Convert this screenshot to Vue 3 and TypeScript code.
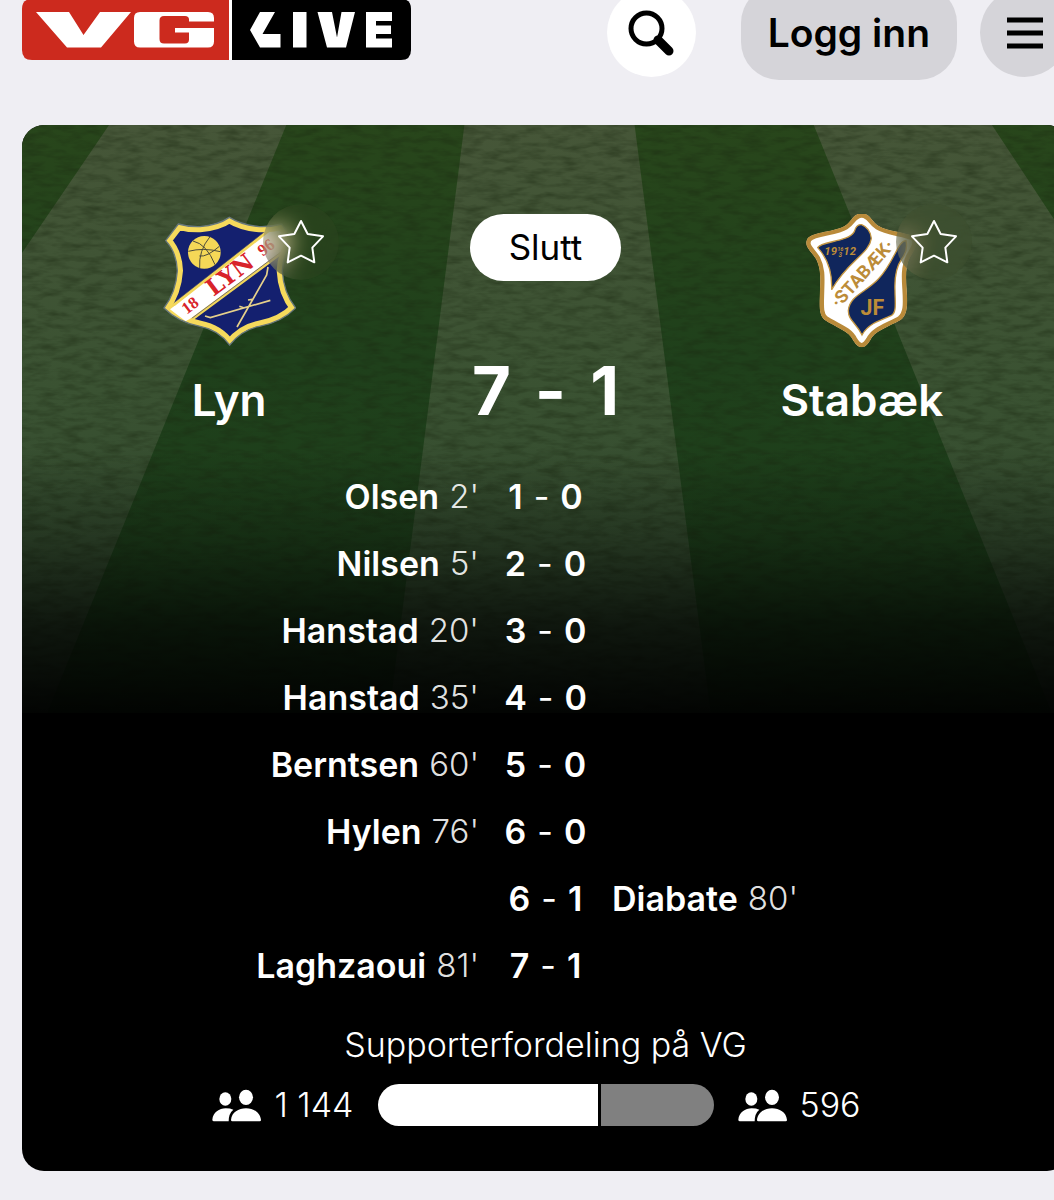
<script setup lang="ts">
interface Goal {
  side: 'home' | 'away'
  player: string
  minute: number
  home: number
  away: number
}

const goals: Goal[] = [
  { side: 'home', player: 'Olsen', minute: 2, home: 1, away: 0 },
  { side: 'home', player: 'Nilsen', minute: 5, home: 2, away: 0 },
  { side: 'home', player: 'Hanstad', minute: 20, home: 3, away: 0 },
  { side: 'home', player: 'Hanstad', minute: 35, home: 4, away: 0 },
  { side: 'home', player: 'Berntsen', minute: 60, home: 5, away: 0 },
  { side: 'home', player: 'Hylen', minute: 76, home: 6, away: 0 },
  { side: 'away', player: 'Diabate', minute: 80, home: 6, away: 1 },
  { side: 'home', player: 'Laghzaoui', minute: 81, home: 7, away: 1 },
]

const supporters = { home: 1144, away: 596 }
const homeShare = (100 * supporters.home) / (supporters.home + supporters.away)
const format = (n: number): string => String(n).replace(/\B(?=(\d{3})+$)/g, ' ')

const lynShield =
  'M238 55Q205 78 150 83Q115 84 85 75L47 125Q80 160 82 215Q78 280 42 327Q85 370 150 382Q205 392 239 438Q275 392 328 382Q395 370 437 327Q400 280 397 215Q400 160 432 125L395 75Q365 84 328 83Q275 78 238 55Z'
const stabaekShield =
  'M212 43C238 43 240 66 262 80C290 98 340 98 368 112C388 125 372 150 357 175C342 205 345 240 347 270C350 320 350 345 330 362C290 385 250 395 237 425Q212 465 187 425C174 395 134 385 100 362C82 345 86 320 87 270C88 235 90 210 75 180C60 155 36 142 50 118C65 98 134 98 162 80C184 66 186 43 212 43Z'
</script>

<template>
  <div class="page">
    <header class="topbar">
      <a class="logo" href="#" aria-label="VG Live">
        <svg viewBox="0 0 389 64" width="389" height="64" aria-hidden="true">
          <path d="M10 0H207V61H10Q0 61 0 51V10Q0 0 10 0Z" fill="#cc2a1e" />
          <path d="M207 0H210V61H207Z" fill="#fff" />
          <path d="M210 0H379Q389 0 389 10V51Q389 61 379 61H210Z" fill="#000" />
          <path
            d="M14 13H47L61.500 36L78 13H109L79 48.500H45ZM118 13H186Q192 13 192 19V22.500H167V20.500Q167 17 163 17H142Q137.500 17 137.500 21.500V40Q137.500 44.500 142 44.500H163Q167 44.500 167 40.500V33.500H153V29H192V42.500Q192 48.500 186 48.500H118Q112 48.500 112 42.500V19Q112 13 118 13Z"
            fill="#fff"
          />
          <path
            d="M238 13H253L240.500 35H258.500V48.500H238L228 31ZM271 13H284.500V48.500H271ZM295.500 13H310L315 38.500L319.500 13H333L324 48.500H305ZM344 13H370V22H354V26.500H369V35H354V39.500H370V48.500H344Z"
            fill="#fff"
          />
        </svg>
      </a>
      <nav class="actions" aria-label="Hovedmeny">
        <button class="round search" type="button" aria-label="Søk">
          <svg viewBox="0 0 46 46" width="46" height="46" aria-hidden="true">
            <circle cx="18.500" cy="18.500" r="15.500" fill="none" stroke="#000" stroke-width="5" />
            <path d="M30 30L41 41" stroke="#000" stroke-width="9" stroke-linecap="round" />
          </svg>
        </button>
        <button class="login" type="button">Logg inn</button>
        <button class="round menu" type="button" aria-label="Meny">
          <svg viewBox="0 0 36 32" width="36" height="32" aria-hidden="true">
            <path d="M0 3H36M0 16H36M0 29H36" stroke="#000" stroke-width="5" />
          </svg>
        </button>
      </nav>
    </header>

    <main class="card">
      <svg class="pitch" viewBox="0 0 1046 588" preserveAspectRatio="none" aria-hidden="true">
        <defs>
          <linearGradient id="dark" x1="0" y1="0" x2="0" y2="1">
            <stop offset="0" stop-color="#28461b" />
            <stop offset="0.400" stop-color="#1f401b" />
            <stop offset="1" stop-color="#1b3d1a" />
          </linearGradient>
          <linearGradient id="light" gradientUnits="userSpaceOnUse" x1="0" y1="0" x2="0" y2="588">
            <stop offset="0" stop-color="#465638" />
            <stop offset="0.450" stop-color="#3a5232" />
            <stop offset="1" stop-color="#2b432a" />
          </linearGradient>
          <linearGradient id="fade" x1="0" y1="0" x2="0" y2="1">
            <stop offset="0.550" stop-color="#000" stop-opacity="0" />
            <stop offset="0.700" stop-color="#000" stop-opacity="0.270" />
            <stop offset="0.850" stop-color="#000" stop-opacity="0.680" />
            <stop offset="1" stop-color="#000" stop-opacity="0.930" />
          </linearGradient>
          <filter id="grass" x="0" y="0" width="100%" height="100%">
            <feTurbulence type="fractalNoise" baseFrequency="0.05 0.16" numOctaves="3" seed="7" />
            <feColorMatrix values="0 0 0 0 0.010  0 0 0 0 0.020  0 0 0 0 0.005  0.900 0 0 0 -0.350" />
          </filter>
        </defs>
        <path d="M0 0H1046V588H0Z" fill="url(#dark)" />
        <path
          d="M87 0H264L25 588H0V128ZM442 0H612L688 588H367ZM791 0H969L1046 117V588H1029Z"
          fill="url(#light)"
        />
        <path d="M0 0H1046V588H0Z" filter="url(#grass)" />
        <path d="M0 0H1046V588H0Z" fill="url(#fade)" />
      </svg>

      <section class="match">
        <div class="team">
          <div class="crest">
            <svg viewBox="36 45 402 402" width="134" height="134" role="img" aria-label="Lyn logo">
              <clipPath id="lyn"><path :d="lynShield" /></clipPath>
              <g clip-path="url(#lyn)">
                <path :d="lynShield" fill="#14206f" />
                <path d="M40 342L400 60L440 128L96 383Z" fill="#fff" stroke="#f2d65a" stroke-width="9" />
                <path d="M58 322L400 54M112 368L440 124" stroke="#3b3f70" stroke-width="2" />
                <path :d="lynShield" fill="none" stroke="#f6da5c" stroke-width="34" />
              </g>
              <path d="M60 331L75 320L124 357L107 367Z" fill="#fff" />
              <path :d="lynShield" fill="none" stroke="#68787c" stroke-width="4" />
              <circle cx="163" cy="160" r="49" fill="#f5d857" />
              <path
                d="M115 157Q160 145 211 158M180 113Q145 155 149 208M129 126Q170 135 195 197M148 171Q170 175 208 142"
                fill="none"
                stroke="#4b4a3c"
                stroke-width="3"
              />
              <g class="lyn-text" fill="#d8232a" text-anchor="middle">
                <text class="year" transform="translate(130 332) rotate(-37)" font-size="50">18</text>
                <text transform="translate(254 246) rotate(-37)" font-size="70">LYN</text>
                <text class="year" transform="translate(358 158) rotate(-37)" font-size="50">96</text>
              </g>
              <path
                d="M165 351L181 356L361 304M261 384L350 228L354 204M268 322L283 327M294 303L307 301"
                fill="none"
                stroke="#e6d08a"
                stroke-width="5"
              />
            </svg>
            <button class="follow" type="button" aria-label="Følg Lyn">
              <svg viewBox="381 51 150 150" width="50" height="50" aria-hidden="true">
                <path d="M456 63L476 102L522 109L490 143L496 187L456 167L416 187L422 143L390 109L436 102Z" />
              </svg>
            </button>
          </div>
          <h2>Lyn</h2>
        </div>

        <div class="center">
          <span class="status">Slutt</span>
          <p class="result"><span>7</span><span>-</span><span>1</span></p>
        </div>

        <div class="team">
          <div class="crest">
            <svg viewBox="12 45 402 402" width="134" height="134" role="img" aria-label="Stabæk logo">
              <clipPath id="stb"><path :d="stabaekShield" /></clipPath>
              <path
                :d="stabaekShield"
                fill="#fff"
                stroke="#b98a3a"
                stroke-width="26"
                clip-path="url(#stb)"
              />
              <g fill="#10265c" stroke="#c49642" stroke-width="4">
                <path d="M212 77Q238 88 241 118C235 165 170 185 122 272C124 220 112 180 80 146C90 126 172 130 190 98Q196 74 212 77Z" />
                <path d="M345 125C320 125 310 190 262 240C225 280 175 290 172 335C172 365 195 370 213 408C230 375 270 362 300 350C318 342 312 310 312 275C310 230 318 200 332 180Q352 155 345 125Z" />
              </g>
              <g class="stb-text" fill="#bc8c38" text-anchor="middle">
                <text transform="translate(228 236) rotate(-48)" font-size="54">·STABÆK·</text>
                <text x="244" y="347" font-size="64">JF</text>
                <g font-style="italic">
                  <text x="119" y="168" font-size="34">19</text>
                  <text x="176" y="168" font-size="34">12</text>
                  <text x="148" y="156" font-size="17">16</text>
                  <text x="148" y="173" font-size="19">3</text>
                </g>
              </g>
            </svg>
            <button class="follow" type="button" aria-label="Følg Stabæk">
              <svg viewBox="381 51 150 150" width="50" height="50" aria-hidden="true">
                <path d="M456 63L476 102L522 109L490 143L496 187L456 167L416 187L422 143L390 109L436 102Z" />
              </svg>
            </button>
          </div>
          <h2>Stabæk</h2>
        </div>
      </section>

      <ol class="goals">
        <li v-for="(goal, i) in goals" :key="i" class="goal">
          <span class="scorer" :class="goal.side">
            <strong>{{ goal.player }}</strong><span class="minute">{{ goal.minute }}'</span>
          </span>
          <span class="standing">
            <strong>{{ goal.home }}</strong><span>-</span><strong>{{ goal.away }}</strong>
          </span>
        </li>
      </ol>

      <section class="support">
        <h3>Supporterfordeling på VG</h3>
        <div class="split">
          <span class="count home">
            <svg viewBox="63 235 150 99" width="50" height="33" aria-hidden="true">
              <ellipse cx="103" cy="265" rx="18" ry="20" /><ellipse cx="165" cy="260" rx="21" ry="23" />
              <path d="M64 327C66 305 85 293 104 293Q118 293 127 297Q113 308 113 332H69Q64 332 64 327ZM120 328C122 305 143 293 165 293S208 305 210 328Q210 332 206 332H124Q120 332 120 328Z" />
            </svg>
            <span>{{ format(supporters.home) }}</span>
          </span>
          <div class="bar" role="img" aria-label="Fordeling mellom supportere">
            <div class="share" :style="{ width: homeShare + '%' }"></div>
            <div class="rest"></div>
          </div>
          <span class="count">
            <svg viewBox="63 235 150 99" width="50" height="33" aria-hidden="true">
              <ellipse cx="103" cy="265" rx="18" ry="20" /><ellipse cx="165" cy="260" rx="21" ry="23" />
              <path d="M64 327C66 305 85 293 104 293Q118 293 127 297Q113 308 113 332H69Q64 332 64 327ZM120 328C122 305 143 293 165 293S208 305 210 328Q210 332 206 332H124Q120 332 120 328Z" />
            </svg>
            <span>{{ format(supporters.away) }}</span>
          </span>
        </div>
      </section>
    </main>
  </div>
</template>

<style>
body {
  background: #efeef3;
}
</style>

<style scoped>
.page {
  min-height: 100vh;
  overflow: hidden;
  box-sizing: border-box;
  padding-left: 22px;
  padding-bottom: 29px;
  background: #efeef3;
  font-family: Inter, "Liberation Sans", sans-serif;
  font-size: 34px;
  color: #fff;
}
.topbar {
  display: flex;
  justify-content: space-between;
  margin: -15px -15px 45px 0;
  height: 95px;
}
.logo {
  display: block;
  padding-top: 14px;
}
.logo svg,
.crest svg,
.round svg {
  display: block;
}
.actions {
  display: flex;
  align-items: center;
}
button {
  border: 0;
  padding: 0;
  font-family: inherit;
  color: #000;
  cursor: pointer;
}
.round {
  display: flex;
  align-items: center;
  justify-content: center;
  width: 89px;
  height: 89px;
  border-radius: 50%;
  background: #d5d4d9;
}
.search {
  margin-right: 45px;
  background: #fff;
}
.login {
  height: 95px;
  margin-right: 23px;
  padding: 0 27px;
  border-radius: 38px;
  background: #d5d4d9;
  font-size: 39px;
  font-weight: 600;
}
.card {
  position: relative;
  margin-right: -15px;
  padding: 89px 49px 45px;
  border-radius: 22px;
  overflow: hidden;
  background: #000;
}
.pitch {
  position: absolute;
  inset: 0 0 auto;
  width: 100%;
  height: 588px;
}
.match,
.goals,
.support {
  position: relative;
}
.match {
  display: grid;
  grid-template-columns: 1fr 1fr 1fr;
}
.team,
.center {
  display: flex;
  flex-direction: column;
  align-items: center;
}
.crest {
  position: relative;
}
.lyn-text {
  font-family: "DejaVu Serif", serif;
  font-weight: 700;
}
.lyn-text .year {
  font-family: "Liberation Serif", serif;
}
.stb-text {
  font-family: Roboto, sans-serif;
  font-weight: 700;
}
.follow {
  position: absolute;
  top: -10px;
  left: 101px;
  display: flex;
  align-items: center;
  justify-content: center;
  width: 76px;
  height: 76px;
  border-radius: 50%;
  background: rgba(60, 75, 40, 0.2);
  backdrop-filter: blur(12px);
}
.follow path {
  fill: none;
  stroke: #fff;
  stroke-width: 6;
  stroke-linejoin: round;
}
h2 {
  margin: 26px 0 0;
  font-size: 44px;
  line-height: 52px;
  font-weight: 600;
}
.status {
  padding: 0 39px;
  border-radius: 34px;
  background: #fff;
  color: #000;
  font-size: 35px;
  line-height: 67px;
}
.result {
  display: flex;
  gap: 24px;
  margin: 70px 0 0;
  font-size: 67px;
  line-height: 80px;
  font-weight: 700;
}
.goals {
  list-style: none;
  margin: 32px 0 24px;
  padding: 0;
}
.goal {
  display: grid;
  grid-template-columns: 1fr 133px 1fr;
  line-height: 67px;
}
.goal > * {
  grid-row: 1;
}
strong {
  font-weight: 600;
}
.scorer {
  display: flex;
  gap: 10px;
}
.scorer.home {
  grid-column: 1;
  justify-content: flex-end;
}
.scorer.away {
  grid-column: 3;
}
.minute {
  font-size: 33px;
  font-weight: 300;
  color: rgba(255, 255, 255, 0.9);
}
.standing {
  grid-column: 2;
  display: flex;
  justify-content: center;
  gap: 11px;
}
h3 {
  margin: 0 0 17px;
  font-size: 34px;
  line-height: 44px;
  font-weight: 350;
  text-align: center;
}
.split {
  display: grid;
  grid-template-columns: 1fr 336px 1fr;
  align-items: center;
  gap: 24px;
  line-height: 42px;
  font-weight: 300;
}
.count {
  display: flex;
  align-items: center;
  gap: 12px;
}
.count.home {
  justify-content: flex-end;
}
.count svg {
  fill: #fff;
}
.bar {
  display: flex;
  gap: 3px;
  height: 42px;
  border-radius: 21px;
  overflow: hidden;
}
.share {
  background: #fff;
}
.rest {
  flex: 1;
  background: #808080;
}
</style>
